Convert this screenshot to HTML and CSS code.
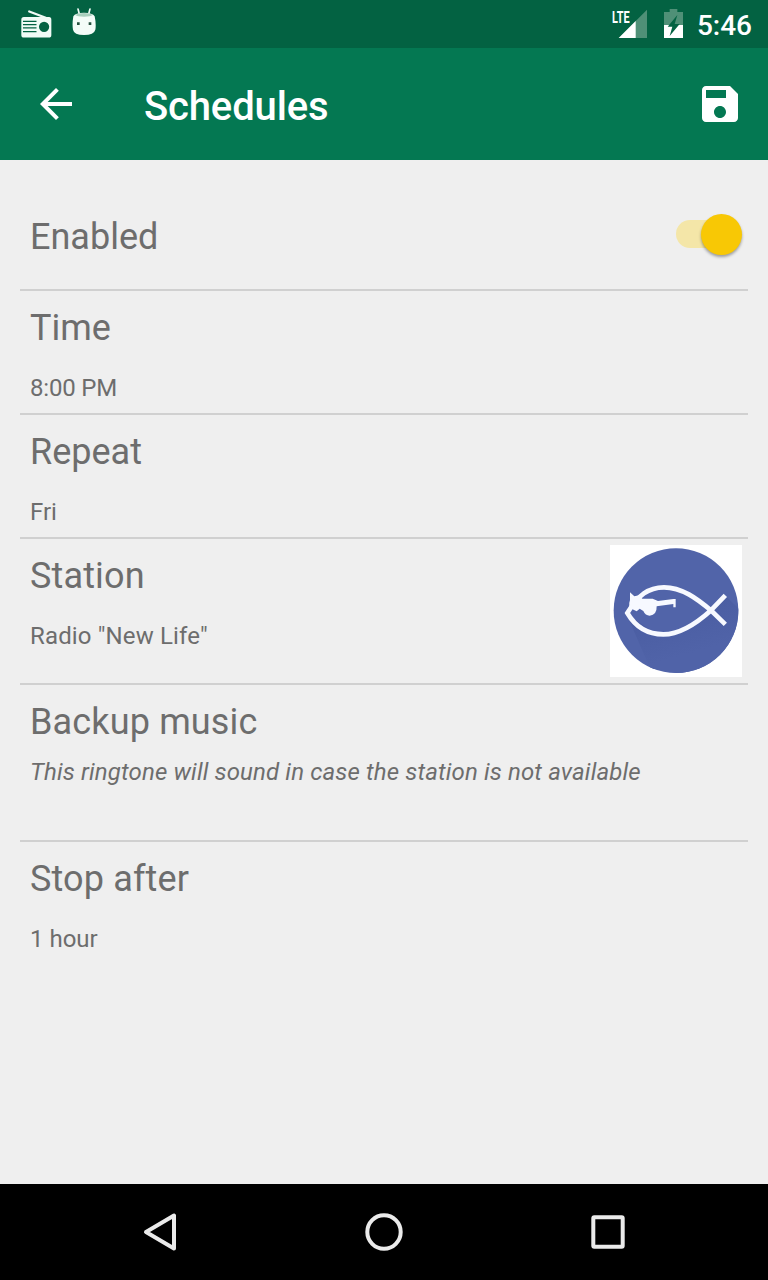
FILE: index.html
```html
<!DOCTYPE html>
<html lang="en">
<head>
  <meta charset="UTF-8" />
  <meta name="viewport" content="width=device-width, initial-scale=1.0" />
  <title>Schedules</title>
  <link rel="stylesheet" href="styles.css">
</head>
<body>

  <div class="status-bar">
    <svg class="radio" viewBox="60 28 100 90" width="33" height="30">
      <path d="M88 35 L138 54" stroke="#f1fbf6" stroke-width="7" stroke-linecap="round" />
      <path fill="#f1fbf6" fill-rule="evenodd" d="M72 52H148Q155 52 155 60V106Q155 114 147 114H72Q64 114 64 106V60Q64 52 72 52ZM69 63V67H110V63ZM69 73V77H110V73ZM69 83V87H110V83ZM69 94V98H110V94ZM133 66A15.500 15.500 0 1 0 133 97A15.500 15.500 0 1 0 133 66Z" />
    </svg>
    <svg class="droid" viewBox="216 22 72 87" width="24" height="29">
      <path d="M234 28L238 43M270 28L266 43" stroke="#f1fbf6" stroke-width="5" stroke-linecap="round" />
      <path d="M220 50Q216 74 219 90Q222 106 252 106Q282 106 286 90Q289 74 284 50Q278 39 252 39Q226 39 220 50Z" fill="#f4fcf8" />
      <path d="M226 46Q234 40 252 40Q270 40 278 46Q272 51 252 51Q232 51 226 46Z" fill="#a9cfbd" />
      <path d="M231 68h8v8h-8zM266 68h8v8h-8z" fill="#26513f" />
    </svg>
    <div class="signal">
      <svg viewBox="54 27 90 90" width="30" height="30">
        <path d="M141 29V114H56Z" fill="#4f9077" />
        <path d="M107 63V114H56Z" fill="#fff" />
      </svg>
      <span class="lte">LTE</span>
    </div>
    <svg class="battery" viewBox="192 27 57 87" width="19" height="29">
      <path d="M192 36H209V27H232V36H249V75H192Z" fill="#4f9077" />
      <path d="M192 75H249V114H192Z" fill="#fff" />
      <path d="M232 45L203 80H217L209 108L239 72H224Z" fill="#036242" />
    </svg>
    <span class="clock">5:46</span>
  </div>

  <header class="toolbar">
    <svg class="back" viewBox="4 4 16 16" width="32" height="32">
      <path fill="#fff" d="M20 11H7.830l5.590-5.590L12 4l-8 8 8 8 1.410-1.410L7.830 13H20v-2z" />
    </svg>
    <h1>Schedules</h1>
    <svg class="save" viewBox="3 3 18 18" width="36" height="36">
      <path fill="#fff" d="M17 3H5c-1.110 0-2 .9-2 2v14c0 1.100.89 2 2 2h14c1.100 0 2-.9 2-2V7l-4-4zm-5 16c-1.660 0-3-1.340-3-3s1.340-3 3-3 3 1.340 3 3-1.340 3-3 3zm3-10H5V5h10v4z" />
    </svg>
  </header>

  <main>
    <div class="row enabled">
      <h2>Enabled</h2>
      <div class="switch"><div class="thumb"></div></div>
    </div>
    <div class="row time">
      <h2>Time</h2>
      <p>8:00 PM</p>
    </div>
    <div class="row">
      <h2>Repeat</h2>
      <p>Fri</p>
    </div>
    <div class="row station">
      <div>
        <h2>Station</h2>
        <p>Radio "New Life"</p>
      </div>
      <svg class="logo" viewBox="30 30 396 396" width="132" height="132">
        <defs>
          <clipPath id="disc"><circle cx="228" cy="227" r="187" /></clipPath>
          <linearGradient id="shade" x1="0" y1="0" x2="0.400" y2="1">
            <stop offset="0" stop-color="#475a9f" />
            <stop offset="0.800" stop-color="#5063a8" />
          </linearGradient>
        </defs>
        <path d="M30 30H426V426H30Z" fill="#fff" />
        <circle cx="228" cy="227" r="187" fill="#5164a9" />
        <path clip-path="url(#disc)" d="M80 238L150 400L300 426L426 300V230L376 182L320 240Q250 310 170 296Z" fill="url(#shade)" />
        <path d="M376 268L335 228C290 190 245 157 192 157C145 157 115 180 82 234C110 282 150 298 190 298C240 298 290 265 335 224L376 181" fill="none" stroke="#f7f9ff" stroke-width="14" />
        <path d="M90 172L103 184L117 181L127 191H158L174 198L220 192H227V217H220V207L170 214Q171 240 149 242Q136 242 130 228L119 221L110 229L88 218Q86 204 90 195Z" fill="#f7f9ff" />
      </svg>
    </div>
    <div class="row backup">
      <h2>Backup music</h2>
      <p>This ringtone will sound in case the station is not available</p>
    </div>
    <div class="row stop">
      <h2>Stop after</h2>
      <p>1 hour</p>
    </div>
  </main>

  <nav class="nav-bar">
    <svg viewBox="0 0 40 40" width="40" height="40">
      <path d="M34 3.500V36.500L6 20Z" fill="none" stroke="#ebebeb" stroke-width="4" stroke-linejoin="round" />
    </svg>
    <svg viewBox="0 0 40 40" width="40" height="40">
      <circle cx="20" cy="20" r="16.700" fill="none" stroke="#ebebeb" stroke-width="4" />
    </svg>
    <svg viewBox="0 0 40 40" width="40" height="40">
      <rect x="5.300" y="5.300" width="29.400" height="29.400" rx="1" fill="none" stroke="#ebebeb" stroke-width="4" />
    </svg>
  </nav>

</body>
</html>
```
FILE: styles.css
```css
* {
  box-sizing: border-box;
}
body {
  margin: 0;
  height: 1280px;
  display: flex;
  flex-direction: column;
  font-family: Roboto, sans-serif;
  background-color: #efefef;
  color: #6d6d6d;
}
svg {
  display: block;
  flex: none;
}
h1, h2, p {
  margin: 0;
}
.status-bar {
  height: 48px;
  display: flex;
  align-items: flex-start;
  padding: 0 16px 0 20px;
  background-color: #036242;
  color: white;
}
.radio {
  margin-top: 9px;
}
.droid {
  margin: 7px 0 0 19px;
}
.signal {
  position: relative;
  margin: 9px 16px 0 auto;
}
.lte {
  position: absolute;
  left: -6px;
  top: 0;
  font-size: 17px;
  line-height: 17px;
  font-weight: 700;
  transform: scaleX(0.64);
  transform-origin: left;
}
.battery {
  margin: 9px 14px 0 0;
}
.clock {
  font-size: 28px;
  line-height: 32px;
  font-weight: 500;
  margin-top: 10px;
}
.toolbar {
  height: 112px;
  display: flex;
  align-items: center;
  padding: 0 30px 0 40px;
  background-color: #047852;
  color: white;
}
.toolbar h1 {
  flex: 1;
  margin-left: 72px;
  padding-top: 6px;
  font-size: 40px;
  line-height: 48px;
  font-weight: 500;
  letter-spacing: -0.15px;
}
main {
  flex: 1;
  padding: 0 20px;
}
.row {
  padding: 16px 10px 11px;
  border-bottom: 2px solid #d0d0d0;
}
.row:last-child {
  border-bottom: none;
}
.row h2 {
  font-size: 36px;
  line-height: 42px;
  font-weight: 400;
}
.row p {
  margin-top: 25px;
  font-size: 24px;
  line-height: 28px;
}
.time p {
  letter-spacing: -0.2px;
}
.enabled {
  height: 131px;
  display: flex;
  justify-content: space-between;
  padding: 56px 6px 0 10px;
}
.switch {
  width: 66px;
  height: 28px;
  margin-top: 4px;
  display: flex;
  align-items: center;
  justify-content: flex-end;
  border-radius: 14px;
  background: linear-gradient(90deg, #f4e6a8 46px, transparent 46px);
}
.thumb {
  width: 41px;
  height: 41px;
  border-radius: 50%;
  background-color: #f8c805;
  box-shadow: 0 2px 3px rgba(0, 0, 0, 0.35);
}
.station {
  height: 146px;
  display: flex;
  justify-content: space-between;
  padding: 0 6px 0 10px;
}
.station h2 {
  margin-top: 16px;
}
.station h2, .backup h2, .stop h2 {
  letter-spacing: 0.15px;
}
.station p {
  letter-spacing: 0.15px;
}
.logo {
  margin-top: 6px;
}
.backup {
  height: 157px;
}
.backup p {
  margin-top: 15px;
  font-style: italic;
  letter-spacing: 0.14px;
}
.nav-bar {
  height: 96px;
  display: flex;
  justify-content: space-between;
  align-items: center;
  padding: 0 140px;
  background-color: black;
}
```
